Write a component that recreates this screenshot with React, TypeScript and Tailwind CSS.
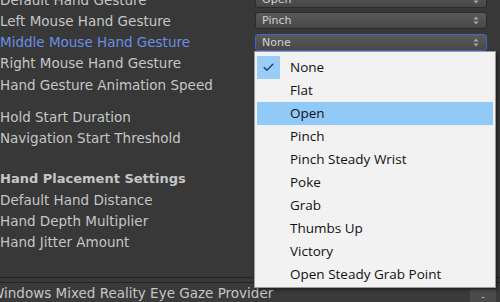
import { Check } from "lucide-react";

const labelFont = { fontFamily: '"DejaVu Sans", Verdana, sans-serif' };
const menuFont = { fontFamily: '"Open Sans", "Noto Sans", sans-serif' };

const options = [
  "None",
  "Flat",
  "Open",
  "Pinch",
  "Pinch Steady Wrist",
  "Poke",
  "Grab",
  "Thumbs Up",
  "Victory",
  "Open Steady Grab Point",
];

function Arrows() {
  return (
    <svg width="6" height="9" viewBox="0 0 6 9" className="text-[#a8a8a8]">
      <path d="M3 0.5 L5.5 3.5 H0.5 Z" fill="currentColor" />
      <path d="M3 8.5 L5.5 5.5 H0.5 Z" fill="currentColor" />
    </svg>
  );
}

function Field({ value, focused }: { value: string; focused?: boolean }) {
  return (
    <div
      className={`h-[17px] w-[232px] rounded-[3px] border flex items-center justify-between pl-[6px] pr-[7px] bg-gradient-to-b from-[#5a5a5a] to-[#474747] text-[11px] text-[#cfcfcf] ${
        focused ? "border-[#3f63cf]" : "border-[#2c2c2c]"
      }`}
      style={labelFont}
    >
      <span className="leading-none">{value}</span>
      <Arrows />
    </div>
  );
}

function Row({
  label,
  value,
  focused,
  bold,
}: {
  label: string;
  value?: string;
  focused?: boolean;
  bold?: boolean;
}) {
  return (
    <div className="h-[21.3px] flex items-center justify-between pr-[13px]">
      <span
        className={`text-[13.5px] whitespace-nowrap ${
          focused ? "text-[#6a8fe6]" : "text-[#c6c6c6]"
        } ${bold ? "font-bold text-[13px]" : ""}`}
        style={labelFont}
      >
        {label}
      </span>
      {value !== undefined && <Field value={value} focused={focused} />}
    </div>
  );
}

export default function App() {
  return (
    <div className="relative w-[500px] h-[302px] overflow-hidden bg-[#383838]">
      <div className="flex flex-col mt-[-11px]">
        <Row label="Default Hand Gesture" value="Open" />
        <Row label="Left Mouse Hand Gesture" value="Pinch" />
        <Row label="Middle Mouse Hand Gesture" value="None" focused />
        <Row label="Right Mouse Hand Gesture" />
        <Row label="Hand Gesture Animation Speed" />
        <div className="h-[10.5px]" />
        <Row label="Hold Start Duration" />
        <Row label="Navigation Start Threshold" />
        <div className="h-[19.5px]" />
        <Row label="Hand Placement Settings" bold />
        <Row label="Default Hand Distance" />
        <Row label="Hand Depth Multiplier" />
        <Row label="Hand Jitter Amount" />
        <div className="h-[24px]" />
        <div className="h-px bg-[#242424]" />
        <div className="h-[4px]" />
        <div className="h-px bg-[#242424]" />
        <div className="h-[20px] flex items-center justify-between bg-[#3a3a3a]">
          <span
            className="ml-[-9px] text-[13.5px] text-[#c6c6c6] whitespace-nowrap"
            style={labelFont}
          >
            Windows Mixed Reality Eye Gaze Provider
          </span>
          <div className="w-[26px] h-[15px] mt-[6px] mr-[4px] bg-[#4b4b4b] text-[#bbbbbb] text-[11px] flex items-center justify-center">
            -
          </div>
        </div>
      </div>

      {/* Popup menu */}
      <div
        className="absolute left-[254px] top-[51px] w-[242px] bg-[#f2f2f2] border border-[#9a9a9a] shadow-[2px_2px_3px_rgba(0,0,0,0.45)] pt-[4px] pb-[1px] px-[2px]"
        style={menuFont}
      >
        {options.map((opt, i) => (
          <div
            key={opt}
            className={`h-[23px] flex items-center text-[13.5px] text-[#111111] ${
              i === 2 ? "bg-[#91c9f7]" : ""
            }`}
          >
            <div className="w-[23px] h-[23px] mr-[10px] flex items-center justify-center">
              {i === 0 && (
                <div className="w-[23px] h-[23px] bg-[#99cdf7] flex items-center justify-center">
                  <Check size={13} strokeWidth={2.5} className="text-[#1c3d6b]" />
                </div>
              )}
            </div>
            <span>{opt}</span>
          </div>
        ))}
      </div>
    </div>
  );
}
